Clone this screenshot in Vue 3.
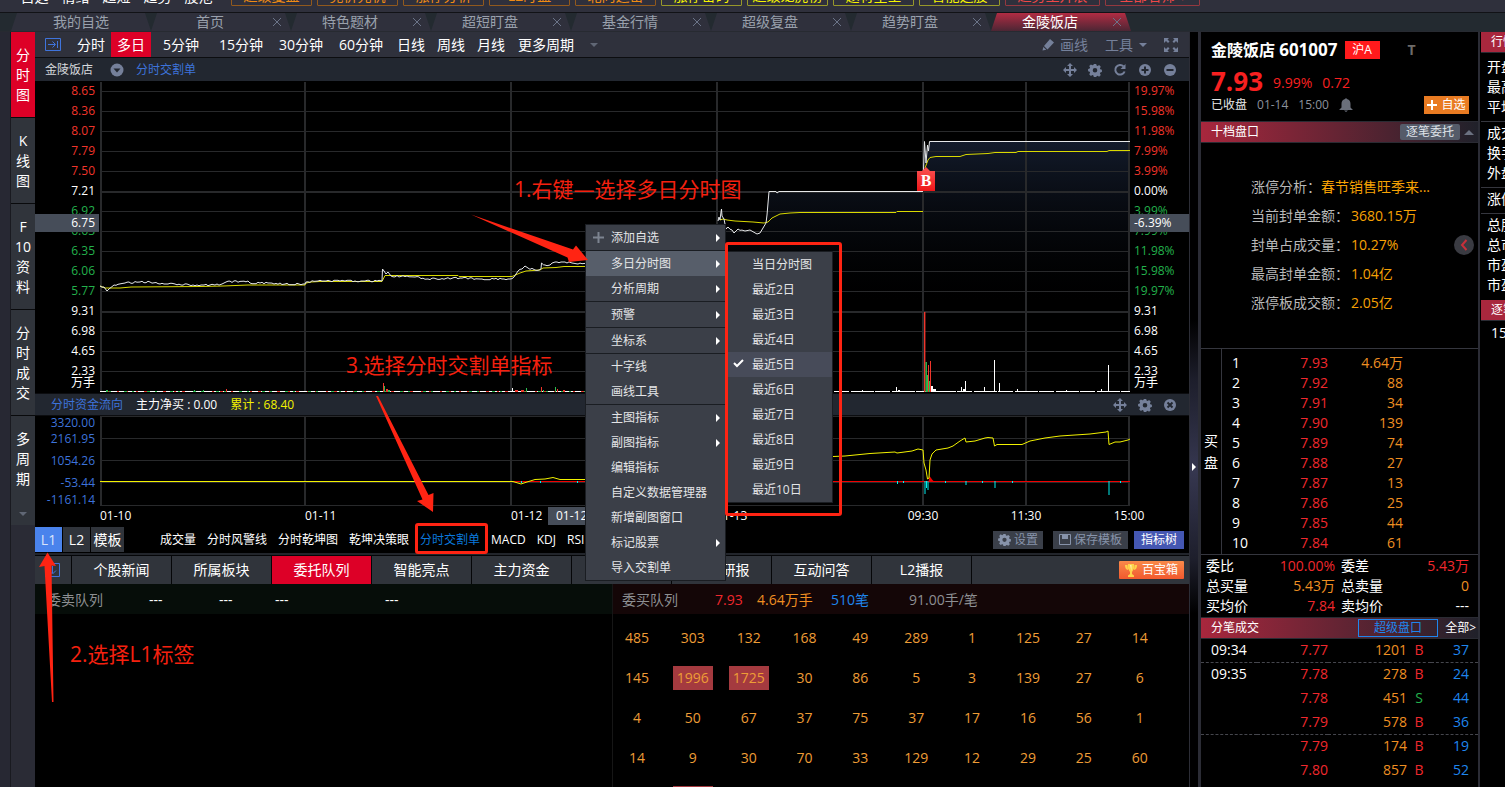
<script setup>
const menusTop = ['自选', '情绪', '超短', '趋势', '股池']
const shortcuts = [
  { t: '超级复盘', c: 'orange' }, { t: '竞价先机', c: 'orange' }, { t: '涨停分析', c: 'orange' },
  { t: 'L2盯盘', c: 'orange' }, { t: '北向追击', c: 'orange' }, { t: '涨停密码', c: 'yellow' },
  { t: '超级龙虎榜', c: 'yellow' }, { t: '题材星空', c: 'yellow' }, { t: '智能选股', c: 'yellow' },
  { t: '趋势主升浪', c: 'red' }, { t: '全部名师 ▾', c: 'red' },
]
const pages = ['我的自选', '首页', '特色题材', '超短盯盘', '基金行情', '超级复盘', '趋势盯盘', '金陵饭店']
const side = [
  { t: ['分', '时', '图'], on: true }, { t: ['K', '线', '图'] }, { t: ['F', '10', '资', '料'] },
  { t: ['分', '时', '成', '交'] }, { t: ['多', '周', '期'], more: true },
]
const periods = [
  { t: '分时', w: 'w40' }, { t: '多日', w: 'w40', on: true }, { t: '5分钟', w: 'w60' }, { t: '15分钟', w: 'w60' },
  { t: '30分钟', w: 'w60' }, { t: '60分钟', w: 'w60' }, { t: '日线', w: 'w40' }, { t: '周线', w: 'w40' },
  { t: '月线', w: 'w40' }, { t: '更多周期', w: 'w70' },
]
const tone = (i) => (i < 5 ? 'r' : i === 5 || i > 10 ? 'w' : 'g')
const leftAxis = ['8.65', '8.36', '8.07', '7.79', '7.50', '7.21', '6.92', '6.63', '6.35', '6.06', '5.77', '9.31', '6.98', '4.65', '2.33']
const rightAxis = ['19.97%', '15.98%', '11.98%', '7.99%', '3.99%', '0.00%', '3.99%', '7.99%', '11.98%', '15.98%', '19.97%', '9.31', '6.98', '4.65', '2.33']
const flowAxis = ['3320.00', '2161.95', '1054.26', '-53.44', '-1161.14']

const rows = Array.from({ length: 15 }, (_, i) => 91 + i * 20)
const cols = [101, 305, 511, 717, 923, 1026, 1129]

// Adds a small repeatable ripple between the key points of a price line.
function ripple(points, amp) {
  const out = []
  let seed = 7
  for (let i = 0; i < points.length - 1; i++) {
    const [x0, y0] = points[i]
    const [x1, y1] = points[i + 1]
    out.push(`${x0},${y0}`)
    if (Math.abs(y1 - y0) > 3) continue
    for (let x = x0 + 2; x < x1 - 1; x += 2) {
      seed = (seed * 73 + 41) % 101
      const n = ((seed % 3) - 1) * amp
      out.push(`${x},${(y0 + ((y1 - y0) * (x - x0)) / (x1 - x0) + n).toFixed(1)}`)
    }
  }
  out.push(points[points.length - 1].join(','))
  return out.join(' ')
}
const price1 = ripple([[100, 286], [104, 287], [107, 291], [109, 289], [114, 285], [125, 283], [140, 282], [150, 282], [160, 284], [175, 284], [193, 285], [204, 285], [215, 285], [222, 284], [226, 282], [248, 281], [250, 283], [270, 283], [285, 284], [305, 284], [306, 282], [318, 281], [345, 281], [382, 281], [382.5, 269], [384, 271], [386, 274], [388, 272], [391, 276], [415, 277], [428, 279], [460, 278], [480, 279], [510, 279], [514, 277], [518, 271], [522, 269], [525, 266], [528, 268], [535, 270], [541, 269], [541.5, 263], [545, 265], [550, 265], [555, 262], [565, 262], [572, 263], [578, 264], [590, 263]], 0.7)
const price2 = ripple([[718, 221], [719, 217], [720, 220], [721, 212], [721.5, 209], [722, 216], [724, 219], [726, 229], [728, 227], [732, 230], [734, 233], [738, 229], [745, 231], [750, 230], [757, 234], [760, 233], [763, 228], [766, 223], [767, 215], [769, 191.5]], 0.7) + ' 776,191.5 777,193 779,191.5 923,191.5'
const price3 = '923.5,170 924.5,141.5 926,163 927.5,145 928.5,151 929.5,141.5 1130,141.5'
const avg = [
  '100,286 105,288 120,288 131,287 200,286.5 223,286 248,285 305,285 306,283 311,282 320,281.5 382,281.5 385,275.5 458,275.5 459,276.5 512,276.5 520,273 526,271 540,270 543,268 556,267.5 564,266.5 590,266.5',
  '720,220 723,219 727,220 735,221 753,222 764,223 768,222 772,218 780,214 790,213 800,212.5 896,212.5 897,211.5 923,211.5',
  '925,168 928,160 930,157.5 936,156.5 960,156.5 966,154.5 988,153.5 995,152.5 1016,152.5 1018,151.5 1107,151.5 1109,150.5 1130,150.5',
]
const bars = [
  [924, 312, 'r', 1.4], [925.5, 362, 'g', 1.4], [927, 375, 'g', 1], [928, 365, 'r', 1], [929, 381, 'g', 1], [930, 361, 'r', 1], [931, 386, 'w', 2],
  [933, 389, 'w', 3], [896, 387, 'w', 1], [898, 390, 'w', 2], [961, 387, 'w', 1], [965, 381, 'w', 1], [963, 389, 'w', 3], [984, 387, 'w', 1], [994, 360, 'w', 1],
  [999, 383, 'w', 1], [1017, 389, 'w', 1], [1066, 390, 'w', 1], [1108, 365, 'w', 1], [1101, 389, 'w', 1], [383, 383, 'r', 1], [384, 386, 'g', 1],
  [386, 389, 'r', 2], [388, 390, 'g', 2], [106, 390, 'g', 2], [194, 390, 'g', 1], [203, 390, 'g', 1], [226, 389, 'r', 1], [512, 388, 'w', 1],
  [515, 390, 'r', 3], [521, 390, 'r', 3], [526, 388, 'g', 1], [541, 387, 'r', 1], [543, 390, 'g', 1], [555, 387, 'g', 1], [557, 389, 'r', 1], [563, 390, 'r', 2], [862, 390, 'w', 1],
]
const hue = { r: '#f0352b', g: '#2dbd52', w: '#ffffff' }
const flowBars = [[521, 483], [540, 483], [577, 483], [897, 484], [903, 483], [924.5, 494], [926, 488], [927.5, 490], [945, 483], [965.5, 485], [982, 483], [994.5, 488], [1012, 483], [1108.5, 495], [1120, 483]]
const flowLine = '833,456.5 845,456 870,453.5 895,452 897,453 912,451 918,449 923,450 924,463 926,470 927.5,479 929,478 930,460 932,454 936,450 948,448 953,446 960,441 965,438 966,442 975,441 985,438 988,437.5 993,438 994.5,446 997,444.5 1022,444.5 1030,441 1045,438 1060,436 1090,434 1106,432 1108,431 1109,444.5 1115,442 1120,442 1128,440 1130,439'

const pct = (x) => ((x - 100) / 1030) * 100 + '%'
const dates = [['01-10', 100], ['01-11', 305], ['01-12', 511], ['01-13', 716]]
const times = [['09:30', 923], ['11:30', 1026], ['15:00', 1129]]
const indicators = ['成交量', '分时风警线', '分时乾坤图', '乾坤决策眼', '分时交割单', 'MACD', 'KDJ', 'RSI']
const bottomTabs = ['个股新闻', '所属板块', '委托队列', '智能亮点', '主力资金', '公司公告', '机构研报', '互动问答', 'L2播报']
const queue = [
  [485, 303, 132, 168, 49, 289, 1, 125, 27, 14],
  [145, 1996, 1725, 30, 86, 5, 3, 139, 27, 6],
  [4, 50, 67, 37, 75, 37, 17, 16, 56, 1],
  [14, 9, 30, 70, 33, 129, 12, 29, 25, 60],
]
const book = [['7.93', '4.64万'], ['7.92', '88'], ['7.91', '34'], ['7.90', '139'], ['7.89', '74'], ['7.88', '27'], ['7.87', '13'], ['7.86', '25'], ['7.85', '44'], ['7.84', '61']]
const analysis = [['涨停分析：', '春节销售旺季来...'], ['当前封单金额：', '3680.15万'], ['封单占成交量：', '10.27%'], ['最高封单金额：', '1.04亿'], ['涨停板成交额：', '2.05亿']]
const ticks = [
  ['09:34', '7.77', '1201', 'B', '37', true], ['09:35', '7.78', '278', 'B', '24'], ['', '7.78', '451', 'S', '44'],
  ['', '7.79', '578', 'B', '36', true], ['', '7.79', '174', 'B', '19'], ['', '7.80', '857', 'B', '52'],
]
const facts = [['开盘', '最高', '平均'], ['成交', '换手', '外盘'], ['涨停'], ['总股', '总市', '市盈', '市盈']]
const menu = [
  { t: '添加自选', sub: true, plus: true, sep: true }, { t: '多日分时图', sub: true, on: true }, { t: '分析周期', sub: true, sep: true },
  { t: '预警', sub: true, sep: true }, { t: '坐标系', sub: true, sep: true }, { t: '十字线' }, { t: '画线工具', sep: true },
  { t: '主图指标', sub: true }, { t: '副图指标', sub: true }, { t: '编辑指标' }, { t: '自定义数据管理器' }, { t: '新增副图窗口' },
  { t: '标记股票', sub: true }, { t: '导入交割单' },
]
const submenu = ['当日分时图', '最近2日', '最近3日', '最近4日', '最近5日', '最近6日', '最近7日', '最近8日', '最近9日', '最近10日']
</script>

<template>
  <div class="app">
    <svg class="defs" width="0" height="0" aria-hidden="true">
      <symbol id="i-move" viewBox="0 0 14 14"><path d="M7 0l3 3H8v3h3V4l3 3-3 3V8H8v3h2l-3 3-3-3h2V8H3v2L0 7l3-3v2h3V3H4z" /></symbol>
      <symbol id="i-gear" viewBox="0 0 14 14"><path fill-rule="evenodd" d="M5.8 1h2.4l.4 1.6 1 .4 1.5-.9 1.7 1.7-.9 1.5.4 1 1.6.4v2.4l-1.6.4-.4 1 .9 1.5-1.7 1.7-1.5-.9-1 .4L8.2 14H5.800l-.4-1.600-1-.4-1.500.9-1.700-1.700.9-1.500-.4-1L.1 8.300V6l1.600-.4.4-1-.9-1.500 1.700-1.700 1.500.9 1-.4zM7 5a2.300 2.300 0 100 4.600A2.300 2.300 0 007 5z" /></symbol>
      <symbol id="i-redo" viewBox="0 0 14 14"><path d="M10.500 3.400A4.800 4.800 0 1011.600 8.500" fill="none" stroke="currentColor" stroke-width="2" /><path d="M12.500 1v5H7.500z" /></symbol>
      <symbol id="i-plus" viewBox="0 0 14 14"><circle cx="7" cy="7" r="6" /><path d="M7 3.500v7M3.500 7h7" stroke="#222730" stroke-width="2" /></symbol>
      <symbol id="i-minus" viewBox="0 0 14 14"><circle cx="7" cy="7" r="6" /><path d="M3.500 7h7" stroke="#222730" stroke-width="2" /></symbol>
      <symbol id="i-close" viewBox="0 0 14 14"><circle cx="7" cy="7" r="6" /><path d="M4.500 4.500l5 5M9.500 4.500l-5 5" stroke="#222730" stroke-width="2" /></symbol>
    </svg>

    <header class="top">
      <nav class="top-menu"><button v-for="m in menusTop" :key="m">{{ m }}</button></nav>
      <div class="shortcuts"><button v-for="(s, i) in shortcuts" :key="s.t" :class="[s.c, { wide: i > 8 }]">{{ s.t }}</button></div>
    </header>

    <nav class="pages">
      <div v-for="(p, i) in pages" :key="p" class="page" :class="{ on: i === 7 }">
        <button class="page-name">{{ p }}</button>
        <button v-if="i" class="page-x" aria-label="关闭"><svg width="10" height="10" viewBox="0 0 10 10"><path d="M1 1l8 8M9 1L1 9" fill="none" stroke="#6b7488" /></svg></button>
      </div>
    </nav>

    <div class="body">
      <nav class="side">
        <button v-for="s in side" :key="s.t.join('')" :class="{ on: s.on, more: s.more }">
          <span v-for="c in s.t" :key="c">{{ c }}</span>
          <i v-if="s.more" class="tri-down"></i>
        </button>
      </nav>

      <main class="chart">
        <div class="bar periods">
          <button class="dock" aria-label="展开"><svg width="16" height="14" viewBox="0 0 16 14"><path d="M.5.5h15v12H.5zM3 6.500h7M7.500 3.500l3 3-3 3M12.500 3v7" fill="none" stroke="#3f74dc" /></svg></button>
          <button v-for="p in periods" :key="p.t" :class="[p.w, { on: p.on }]">{{ p.t }}</button>
          <i class="tri-down"></i>
          <div class="tools">
            <button><svg width="13" height="13" viewBox="0 0 13 13"><path d="M8 1l4 3.500-6.500 7L2 8zM1.300 9l3 2.800L.5 12.500z" fill="#75809a" /></svg>画线</button>
            <button>工具<i class="tri-down light"></i></button>
            <button aria-label="全屏"><svg width="14" height="14" viewBox="0 0 14 14"><path d="M0 0h5L3.500 1.500 5.500 3.500l-1.500 1.500-2-2L0 5zM14 0v5l-2-2-2 2-1.500-1.500 2-2L9 0zM0 14V9l2 2 2-2 1.500 1.500-2 2L5 14zM14 14H9l1.500-1.500-2-2L10 9l2 2 2-2z" fill="#75809a" /></svg></button>
          </div>
        </div>

        <div class="bar title">
          <span class="stock">金陵饭店</span>
          <button aria-label="选项"><svg width="14" height="14" viewBox="0 0 14 14"><circle cx="7" cy="7" r="6.500" fill="#75809a" /><path d="M3.500 5.500h7L7 9.500z" fill="#222730" /></svg></button>
          <a href="#">分时交割单</a>
          <div class="icons">
            <button v-for="n in ['move', 'gear', 'redo', 'plus', 'minus']" :key="n" :aria-label="n"><svg width="14" height="14"><use :href="'#i-' + n" /></svg></button>
          </div>
        </div>

        <div class="plot-row">
          <div class="axis left">
            <span v-for="(v, i) in leftAxis" :key="i" :class="tone(i)">{{ v }}</span>
            <span class="unit">万手</span>
            <span class="cursor">6.75</span>
          </div>
          <div class="plot">
            <svg viewBox="100 81 1030 312" preserveAspectRatio="none">
              <defs><linearGradient id="shade" x1="0" y1="141" x2="0" y2="300" gradientUnits="userSpaceOnUse"><stop offset="0" stop-color="#131b2b" /><stop offset="1" stop-color="#05070b" stop-opacity="0" /></linearGradient></defs>
              <polygon :points="price1 + ' 590,310 100,310'" fill="url(#shade)" />
              <polygon :points="price2 + ' 923,310 718,310'" fill="url(#shade)" />
              <polygon :points="price3 + ' 1130,310 923,310'" fill="url(#shade)" />
              <g fill="#28292b" shape-rendering="crispEdges">
                <rect v-for="(y, i) in rows" :key="'r' + y" x="100" :y="y" width="1030" :height="i === 5 || i === 11 ? 2 : 1" />
                <rect v-for="x in cols" :key="'c' + x" :x="x - 1" y="82" width="2" height="310" />
              </g>
              <polyline v-for="a in avg" :key="a" :points="a" fill="none" stroke="#d9d900" />
              <polyline v-for="p in [price1, price2, price3]" :key="p" :points="p" fill="none" stroke="#e6e8ea" />
              <g fill="none">
                <path d="M100 391.500h1030" stroke="#fff" />
                <path d="M106 391.500h480" stroke="#e0352b" stroke-dasharray="3 8 2 6" />
                <path d="M109 391.500h477" stroke="#2dbd52" stroke-dasharray="2 13 3 5" />
                <path d="M833 391.500h297" stroke="#000" stroke-dasharray="1 15 2 23" />
              </g>
              <rect v-for="(b, i) in bars" :key="i" :x="b[0]" :y="b[1]" :width="b[3]" :height="392 - b[1]" :fill="hue[b[2]]" />
            </svg>
            <span class="buy" :style="{ left: pct(917) }">B</span>
          </div>
          <div class="axis right">
            <span v-for="(v, i) in rightAxis" :key="i" :class="tone(i)">{{ v }}</span>
            <span class="unit">万手</span>
            <span class="cursor">-6.39%</span>
          </div>
        </div>

        <div class="bar flow-title">
          <a href="#">分时资金流向</a><span>主力净买 : 0.00</span><span class="y">累计 : 68.40</span>
          <div class="icons">
            <button v-for="n in ['move', 'gear', 'close']" :key="n" :aria-label="n"><svg width="14" height="14"><use :href="'#i-' + n" /></svg></button>
          </div>
        </div>

        <div class="flow-row">
          <div class="flow-axis"><span v-for="v in flowAxis" :key="v">{{ v }}</span></div>
          <div class="plot">
            <svg viewBox="100 416 1030 90" preserveAspectRatio="none">
              <g fill="#28292b" shape-rendering="crispEdges">
                <rect v-for="y in [416, 438, 460, 482, 505]" :key="y" x="100" :y="y" width="1030" height="1" />
                <rect v-for="x in cols" :key="x" :x="x - 1" y="417" width="2" height="89" />
              </g>
              <rect x="511" y="481" width="619" height="1" fill="#f00000" />
              <rect v-for="b in flowBars" :key="b[0]" :x="b[0]" y="481" width="1" :height="b[1] - 481" fill="#00f0f0" />
              <path d="M928.500 482l1-6 3 4 2 2z" fill="#f00000" />
              <rect x="100" y="481" width="413" height="1" fill="#f2f200" />
              <path d="M513 481.500l8 2.500 6-2 8-2.500 10-.5 8-1.500 7 2h30" fill="none" stroke="#f2f200" />
              <polyline :points="flowLine" fill="none" stroke="#f2f200" />
            </svg>
          </div>
          <div class="flow-end"></div>
        </div>

        <div class="time-axis">
          <div class="time-scale">
            <span v-for="d in dates" :key="d[0]" :style="{ left: pct(d[1]) }">{{ d[0] }}</span>
            <span class="cursor-date" :style="{ left: pct(548) }">01-12 10:30</span>
            <span v-for="d in times" :key="d[0]" class="mid" :style="{ left: pct(d[1]) }">{{ d[0] }}</span>
          </div>
        </div>

        <div class="indicators">
          <div class="levels"><button class="on">L1</button><button>L2</button><button class="tpl">模板</button></div>
          <div class="names"><button v-for="n in indicators" :key="n" :class="{ sel: n === '分时交割单' }">{{ n }}</button></div>
          <div class="actions">
            <button class="set"><svg width="13" height="13"><use href="#i-gear" /></svg>设置</button>
            <button class="save"><svg width="12" height="11" viewBox="0 0 12 11"><path d="M.5.5h11v10H.5z" fill="none" stroke="currentColor" /><path d="M3 1h6v4H3z" /></svg>保存模板</button>
            <button class="tree">指标树</button>
          </div>
        </div>

        <div class="tabs">
          <button class="fold" aria-label="收起"><svg width="15" height="14" viewBox="0 0 15 14"><path d="M.5.5h14v13H.5zM4 7.500L7.500 11 11 7.500M7.500 3v7" fill="none" stroke="#3f74dc" /></svg></button>
          <button v-for="t in bottomTabs" :key="t" class="tab" :class="{ on: t === '委托队列' }">{{ t }}</button>
          <div class="tabs-rest">
            <button class="box"><svg width="12" height="13" viewBox="0 0 12 13"><path d="M3 0h6v4.500L7 8v2l2 1.500V13H3v-1.500L5 10V8L3 4.500zM2.500 1H0c0 3 1 4.500 3 5zM9.500 1H12c0 3-1 4.500-3 5z" fill="#ffd34a" /><path d="M5 1h1.500v6z" fill="#fff3b8" /></svg>百宝箱</button>
          </div>
        </div>

        <div class="queues">
          <section class="sell">
            <div class="q-head"><span class="lab">委卖队列</span><span class="d1">---</span><span class="d2">---</span><span class="d3">---</span><span>---</span></div>
          </section>
          <section class="buyq">
            <div class="q-head"><span class="lab">委买队列</span><span class="red p">7.93</span><span class="amber v">4.64万手</span><span class="blue n">510笔</span><span class="lab">91.00手/笔</span></div>
            <table class="q-table">
              <tbody>
                <tr v-for="(r, i) in queue" :key="i"><td v-for="(c, j) in r" :key="j"><span :class="{ hot: c > 1000 }">{{ c }}</span></td></tr>
                <tr><td></td><td><span class="hot"></span></td><td colspan="8"></td></tr>
              </tbody>
            </table>
          </section>
        </div>
      </main>

      <div class="splitter"><i></i></div>

      <aside class="quote">
        <div class="q-name"><h1>金陵饭店 <span>601007</span></h1><span class="tag">沪A</span><span class="tee">T</span></div>
        <div class="q-price"><strong>7.93</strong><span>9.99%</span><span>0.72</span></div>
        <div class="q-state">
          <span class="closed">已收盘</span><span>01-14</span><span>15:00</span>
          <svg width="14" height="14" viewBox="0 0 14 14"><path d="M7 0l1 1c2.500.6 3.500 2.500 3.500 5v3.500L14 12H0l2.500-2.500V6c0-2.500 1-4.400 3.500-5zM5 12.500h4L7 14z" fill="#6a6f7a" /></svg>
          <button class="add"><svg width="10" height="10" viewBox="0 0 10 10"><path d="M5 0v10M0 5h10" stroke="#fff" stroke-width="2" /></svg>自选</button>
        </div>
        <div class="strip"><span>十档盘口</span><button class="entrust">逐笔委托</button><i class="tri-up"></i></div>
        <div class="analysis">
          <div v-for="a in analysis" :key="a[0]"><span>{{ a[0] }}</span><em>{{ a[1] }}</em></div>
          <button class="round" aria-label="上一项"><svg width="8" height="12" viewBox="0 0 8 12"><path d="M6.500 1L2 6l4.500 5" fill="none" stroke="#c8303a" stroke-width="2" /></svg></button>
        </div>
        <div class="book">
          <div class="book-side"><span>买</span><span>盘</span></div>
          <table><tbody><tr v-for="(b, i) in book" :key="i"><th scope="row">{{ i + 1 }}</th><td class="bp">{{ b[0] }}</td><td class="bv">{{ b[1] }}</td><td></td></tr></tbody></table>
        </div>
        <div class="stats">
          <span>委比</span><b class="red">100.00%</b><span>委差</span><b class="red">5.43万</b>
          <span>总买量</span><b class="amber">5.43万</b><span>总卖量</span><b class="amber">0</b>
          <span>买均价</span><b class="red">7.84</b><span>卖均价</span><b>---</b>
        </div>
        <div class="strip second"><span>分笔成交</span><button class="super">超级盘口</button><a href="#">全部&gt;</a></div>
        <table class="ticks">
          <tbody>
            <tr v-for="(t, i) in ticks" :key="i" :class="{ dash: t[5] }"><th scope="row">{{ t[0] }}</th><td class="tp">{{ t[1] }}</td><td class="tv">{{ t[2] }}</td><td class="ts" :class="t[3]">{{ t[3] }}</td><td class="tn">{{ t[4] }}</td></tr>
          </tbody>
        </table>
      </aside>

      <aside class="facts">
        <div class="f-head">行情</div>
        <div v-for="(g, i) in facts" :key="i" class="f-group"><span v-for="(f, j) in g" :key="j">{{ f }}</span></div>
        <div class="f-head">逐笔</div>
        <div class="f-time">15:00</div>
      </aside>
    </div>

    <div class="menu">
      <button v-for="m in menu" :key="m.t" :class="{ on: m.on, sep: m.sep }">
        <svg v-if="m.plus" class="m-plus" width="11" height="11" viewBox="0 0 11 11"><path d="M5.500 0v11M0 5.500h11" stroke="#7d8490" stroke-width="2" /></svg>
        {{ m.t }}<i v-if="m.sub"></i>
      </button>
    </div>
    <div class="menu sub">
      <button v-for="s in submenu" :key="s" :class="{ cur: s === '最近5日' }">
        <svg v-if="s === '最近5日'" class="m-check" width="11" height="9" viewBox="0 0 11 9"><path d="M1 4l3 3 6-6" fill="none" stroke="#fff" stroke-width="2" /></svg>
        {{ s }}
      </button>
    </div>

    <svg class="arrows" aria-hidden="true">
      <g fill="#ff2413">
        <path d="M471 214.500L573 249.500l3-4L588 260l-19 2-1.500-4.500z" />
        <path d="M376 396h2l50.500 99 5-2-.5 19-16-11 5.500-1.500z" />
        <path d="M47.500 552.500L56 566l-4.500-.5L53.500 702h-1.500L44.500 566l-5.500 1z" />
      </g>
    </svg>
    <div class="frame f1"></div>
    <div class="frame f2"></div>
    <p class="note n1">1.右键—选择多日分时图</p>
    <p class="note n2">2.选择L1标签</p>
    <p class="note n3">3.选择分时交割单指标</p>
  </div>
</template>

<style>
body { margin: 0; background: #000; }
</style>

<style scoped>
.app { position: relative; display: flex; flex-direction: column; height: 100vh; overflow: hidden; background: #000; color: #fff; font: 14px/20px "Open Sans", "Noto Sans CJK SC", sans-serif; }
.app *, .app *::before { box-sizing: border-box; }
button { border: 0; padding: 0; margin: 0; background: none; color: inherit; font: inherit; white-space: nowrap; }
a { color: inherit; text-decoration: none; }
table { border-collapse: collapse; border-spacing: 0; }
td, th { padding: 0; font-weight: 400; }
svg { display: block; fill: currentColor; flex: none; }
.defs, .arrows, .frame, .note, .menu { position: absolute; }
.red { color: #f0282d; }
.amber { color: #ee8f22; }
.blue { color: #1f86ee; }
.tri-down { display: block; width: 0; height: 0; border: 4px solid transparent; border-top-color: #606775; border-bottom: 0; }
.tri-down.light { border-top-color: #75809a; }

.top { display: flex; flex: none; align-items: flex-end; height: 13px; padding: 0 0 6px 14px; overflow: hidden; background: #2f303c; border-bottom: 1px solid #111216; }
.top-menu { display: flex; width: 217px; }
.top-menu button { width: 41px; height: 20px; line-height: 22px; }
.shortcuts { display: flex; gap: 5px; }
.shortcuts button { width: 81px; height: 22px; border: 1px solid; border-radius: 1px; line-height: 22px; }
.shortcuts .wide { width: 95px; }
.shortcuts .orange { color: #f08c14; border-color: #91591d; }
.shortcuts .yellow { color: #f5f500; border-color: #97972a; }
.shortcuts .red { color: #f04848; border-color: #94383f; }

.pages { display: flex; flex: none; height: 19px; padding-left: 11px; background: #232a30; border-bottom: 1px solid #272a31; }
.page { display: flex; align-items: center; width: 140px; background: #2f303c; color: #99a0ac; clip-path: polygon(6px 0, calc(100% - 6px) 0, 100% 100%, 0 100%); }
.page-name { flex: 1; line-height: 20px; }
.page-x { display: flex; justify-content: center; width: 16px; margin-right: 6px; }
.page.on { color: #fff; background: linear-gradient(#b12c43, #4c2634); }

.body { display: flex; flex: 1; min-height: 0; padding-left: 10px; background: #272833; }
.side { display: flex; flex: none; flex-direction: column; width: 25px; border-left: 1px solid #191a20; background: #2a2b35; }
.side button { display: flex; flex-direction: column; align-items: center; padding: 13px 0 12px; border-bottom: 1px solid #090a0c; background: #30343b; }
.side button.on { background: #dd0027; }
.side button.more { border-bottom: 0; padding-bottom: 9px; }
.side .tri-down { margin-top: 23px; }

.chart { display: flex; flex: 1; flex-direction: column; min-width: 0; background: #000; }
.bar { display: flex; flex: none; align-items: center; }
.periods { height: 26px; background: #2f313c; border-bottom: 1px solid #0c0d10; }
.periods > button { height: 25px; }
.periods .dock { display: flex; align-items: center; width: 36px; padding-left: 10px; }
.w40 { width: 40px; }
.w60 { width: 60px; }
.w70 { width: 70px; }
.periods .on { background: #dd0027; }
.periods > .tri-down { margin-left: 9px; }
.tools { display: flex; gap: 17px; margin-left: auto; margin-right: 11px; color: #75809a; }
.tools button { display: flex; align-items: center; gap: 5px; }
.tools button:nth-child(2) { gap: 6px; }
.title { height: 23px; padding: 0 12px 0 10px; background: #222730; font-size: 12px; }
.title .stock { color: #d6d9dd; }
.title > button { margin: 0 12px 0 17px; }
.title a, .flow-title a { color: #3d73da; }
.icons { display: flex; gap: 11px; margin-left: auto; color: #75809a; }

.plot-row { display: flex; flex: none; height: 312px; }
.axis { position: relative; display: flex; flex: none; flex-direction: column; font-size: 12px; }
.axis.left { width: 65px; padding-right: 5px; text-align: right; }
.axis.right { width: 59px; padding-left: 4px; }
.axis .unit { line-height: 12px; margin-top: -4px; }
.axis .r { color: #f0352b; }
.axis .g { color: #23b14c; }
.axis .cursor { position: absolute; inset: 133px 1px auto 0; height: 18px; padding: 0 4px; background: #464d59; line-height: 18px; }
.axis.right .cursor { right: 0; }
.plot { position: relative; flex: 1; min-width: 0; }
.plot svg { width: 100%; height: 100%; }
.buy { position: absolute; top: 90px; width: 18px; height: 20px; background: linear-gradient(#f84a4a, #ee1518); text-align: center; font: 700 16px/20px "Liberation Serif", serif; }
.buy::before { content: ""; position: absolute; left: 5px; top: -4px; border: 4px solid transparent; border-top: 0; border-bottom-color: #f84a4a; }

.flow-title { height: 23px; padding: 0 12px 0 16px; gap: 13px; background: #222730; border-top: 1px solid #0c0d10; border-bottom: 1px solid #0c0d10; font-size: 12px; }
.flow-title .y { color: #f2f200; }
.flow-row { display: flex; flex: none; height: 90px; }
.flow-axis { display: grid; flex: none; grid-template-rows: 13px 20px 24px 20px 13px; align-items: center; width: 65px; padding-right: 5px; color: #3d73da; font-size: 12px; line-height: 12px; text-align: right; }
.flow-end { width: 59px; }
.time-axis { flex: none; height: 20px; padding: 0 59px 0 65px; font-size: 12px; }
.time-scale { position: relative; height: 20px; }
.time-scale span { position: absolute; white-space: nowrap; }
.time-scale .mid { transform: translateX(-50%); }
.time-scale .cursor-date { top: 1px; height: 18px; padding: 0 8px; background: #464d59; line-height: 18px; }

.indicators { display: flex; flex: none; align-items: center; height: 29px; border-bottom: 2px solid #22252b; font-size: 12px; }
.levels { display: flex; gap: 1px; width: 125px; font-size: 14px; }
.levels button { width: 27px; height: 25px; background: #30343b; }
.levels .tpl { width: 33px; }
.levels .on { background: #4a83ec; color: #d9e4fa; }
.names { display: flex; gap: 11px; }
.names .sel { color: #0a78dc; }
.actions { display: flex; margin-left: auto; padding-right: 5px; }
.actions button { display: flex; align-items: center; justify-content: center; gap: 3px; height: 18px; background: #3a3f49; color: #8793aa; }
.set { width: 50px; margin-right: 10px; }
.save { width: 75px; margin-right: 6px; }
.actions .tree { width: 50px; background: #4557b2; color: #fff; }

.tabs { display: flex; flex: none; gap: 1px; height: 29px; padding-top: 1px; background: #050608; }
.tabs > * { background: #30343b; }
.fold { width: 36px; padding-left: 10px; }
.tab { width: 99px; }
.tab.on { background: #dd0027; }
.tabs-rest { display: flex; flex: 1; align-items: center; justify-content: flex-end; padding-right: 5px; }
.box { display: flex; align-items: center; justify-content: center; gap: 5px; width: 65px; height: 18px; border-radius: 1px; background: linear-gradient(#f98a4a, #f2592e); font-size: 12px; }

.queues { display: flex; flex: 1; min-height: 0; }
.queues section { width: 50%; }
.buyq { border-left: 1px solid #161616; }
.q-head { display: flex; align-items: center; height: 30px; padding-top: 1px; }
.sell .q-head { padding-left: 12px; background: #060d09; }
.buyq .q-head { padding-left: 9px; background: #140607; }
.lab { color: #8d8f92; }
.d1 { width: 70px; margin-left: 46px; }
.d2 { width: 56px; }
.d3 { width: 110px; }
.p { width: 42px; margin-left: 37px; }
.v { width: 74px; }
.n { width: 78px; }
.q-table { width: 97%; margin-top: 4px; table-layout: fixed; color: #ee9d36; text-align: center; }
.q-table td { height: 40px; padding-right: 8px; }
.q-table span { display: inline-block; width: 40px; height: 24px; line-height: 24px; vertical-align: middle; }
.q-table .hot { background: #a43a3f; }

.splitter { display: flex; flex: none; align-items: center; justify-content: flex-end; width: 12px; padding: 115px 2px 0 0; border-left: 1px solid #2c2d36; border-right: 3px solid #2b2c35; background: linear-gradient(#000 38%, #1d1e2b 46%, #363750 58%, #1d1e2b 70%, #000 77%); }
.splitter i { border: 4px solid transparent; border-left: 4px solid #fff; border-right: 0; }

.quote { flex: none; width: 279px; border-right: 2px solid #2b2c35; background: #000; }
.q-name { display: flex; align-items: center; height: 36px; padding-left: 10px; }
.q-name h1 { margin: 0; font-size: 16px; font-weight: 700; white-space: nowrap; }
.q-name h1 span { font-size: 17px; }
.tag { width: 35px; margin-left: 7px; background: #ff1a1c; font-size: 12px; line-height: 18px; text-align: center; }
.tee { margin-left: 28px; color: #6e6b69; font-weight: 700; }
.q-price { display: flex; align-items: center; gap: 10px; height: 26px; padding-left: 10px; color: #f82020; }
.q-price strong { font-size: 26px; }
.q-price span { padding-top: 4px; }
.q-state { display: flex; align-items: center; height: 21px; margin-bottom: 6px; padding: 0 9px 0 10px; color: #8c929c; font-size: 12px; }
.q-state span { margin-right: 10px; }
.q-state .closed { color: #e8e8e8; }
.add { display: flex; align-items: center; justify-content: center; gap: 4px; width: 45px; height: 18px; margin-left: auto; background: #e97b22; color: #fff; }
.strip { display: flex; align-items: center; height: 22px; padding-left: 10px; border-top: 1px solid #2a2b33; border-bottom: 1px solid #2a2b33; background: linear-gradient(90deg, #a8273d, #20212a); font-size: 12px; }
.entrust { width: 60px; height: 16px; margin: 0 4px 0 auto; border-radius: 2px; background: #555b69; color: #dfe2e8; line-height: 16px; }
.tri-up { margin-right: 4px; border: 5px solid transparent; border-top: 0; border-bottom-color: #6b7180; }
.analysis { position: relative; padding: 29px 0 31px 50px; color: #b8b8b8; line-height: 29px; }
.analysis div { display: flex; }
.analysis span { min-width: 70px; }
.analysis em { font-style: normal; color: #f7a204; }
.analysis div:nth-child(n+2) span { min-width: 100px; }
.round { position: absolute; top: 92px; right: 4px; display: flex; align-items: center; justify-content: center; width: 20px; height: 20px; border-radius: 50%; background: #3a3b42; }
.book { display: flex; border-top: 1px solid #35363e; border-bottom: 1px solid #35363e; }
.book-side { display: flex; flex-direction: column; justify-content: center; align-items: center; width: 21px; border-right: 1px solid #35363e; line-height: 22px; }
.book table { flex: 1; margin: 4px 0 1px; }
.book tr { height: 20px; }
.book th { width: 36px; padding-left: 10px; text-align: left; }
.bp { width: 70px; color: #f0282d; text-align: right; }
.bv { width: 75px; color: #ee8f22; text-align: right; }
.stats { display: grid; grid-template-columns: 54px 75px 51px 83px; padding: 1px 0 1px 5px; }
.stats b { font-weight: 400; text-align: right; }
.stats span:nth-child(4n+3) { padding-left: 6px; }
.super { width: 80px; height: 18px; margin: 0 7px 0 auto; border: 1px solid #1f86ee; color: #1f86ee; line-height: 16px; }
.second { padding-right: 2px; }
.ticks { width: 100%; table-layout: fixed; }
.ticks tr { height: 24px; }
.ticks tr:first-child { height: 23px; }
.ticks .dash { border-bottom: 1px dashed #45464d; }
.ticks th { width: 56px; padding-left: 10px; text-align: left; }
.tp { width: 71px; color: #f0282d; text-align: right; }
.tv { width: 79px; color: #ee8f22; text-align: right; }
.ts { width: 24px; text-align: center; color: #f0282d; }
.ts.S { color: #23b14c; }
.tn { padding-right: 9px; color: #1f86ee; text-align: right; }

.facts { flex: none; width: 25px; overflow: hidden; border-left: 1px solid #000; background: #000; white-space: nowrap; }
.f-head { height: 21px; padding-left: 10px; border-bottom: 1px solid #2a2b33; background: #a8273d; font-size: 12px; }
.f-group { padding: 1px 0 4px 6px; border-bottom: 1px solid #35363e; }
.f-group:nth-child(2) { padding: 4px 0 4px 6px; }
.f-group:nth-child(5) { padding-bottom: 5px; border-bottom: 0; }
.f-group span { display: block; }
.f-time { padding: 2px 0 0 10px; }

.menu { left: 585px; top: 224px; width: 141px; border: 1px solid #1a1d22; background: #3b3f48; color: #e4e5e7; font-size: 12px; }
.menu button { position: relative; display: block; width: 100%; height: 25px; padding-left: 25px; text-align: left; line-height: 25px; }
.menu button.sep { height: 26px; border-bottom: 1px solid #1a1d22; }
.menu button.on { background: #575e6a; }
.menu i { position: absolute; right: 5px; top: 9px; border: 4px solid transparent; border-left: 4px solid #fff; border-right: 0; }
.m-plus { position: absolute; left: 7px; top: 7px; }
.menu.sub { left: 727px; top: 251px; width: 106px; }
.sub button { padding-left: 24px; }
.sub button.cur { background: #474b59; }
.m-check { position: absolute; left: 5px; top: 7px; }
.arrows { inset: 0; width: 100%; height: 100%; pointer-events: none; }
.frame { border: 3px solid #ff2413; border-radius: 3px; pointer-events: none; }
.f1 { left: 725px; top: 242px; width: 117px; height: 274px; }
.f2 { left: 415px; top: 523px; width: 73px; height: 31px; }
.note { margin: 0; color: #f5200f; font-size: 21px; line-height: 28px; white-space: nowrap; }
.n1 { left: 514px; top: 175px; }
.n2 { left: 70px; top: 640px; }
.n3 { left: 346px; top: 351px; }
</style>
